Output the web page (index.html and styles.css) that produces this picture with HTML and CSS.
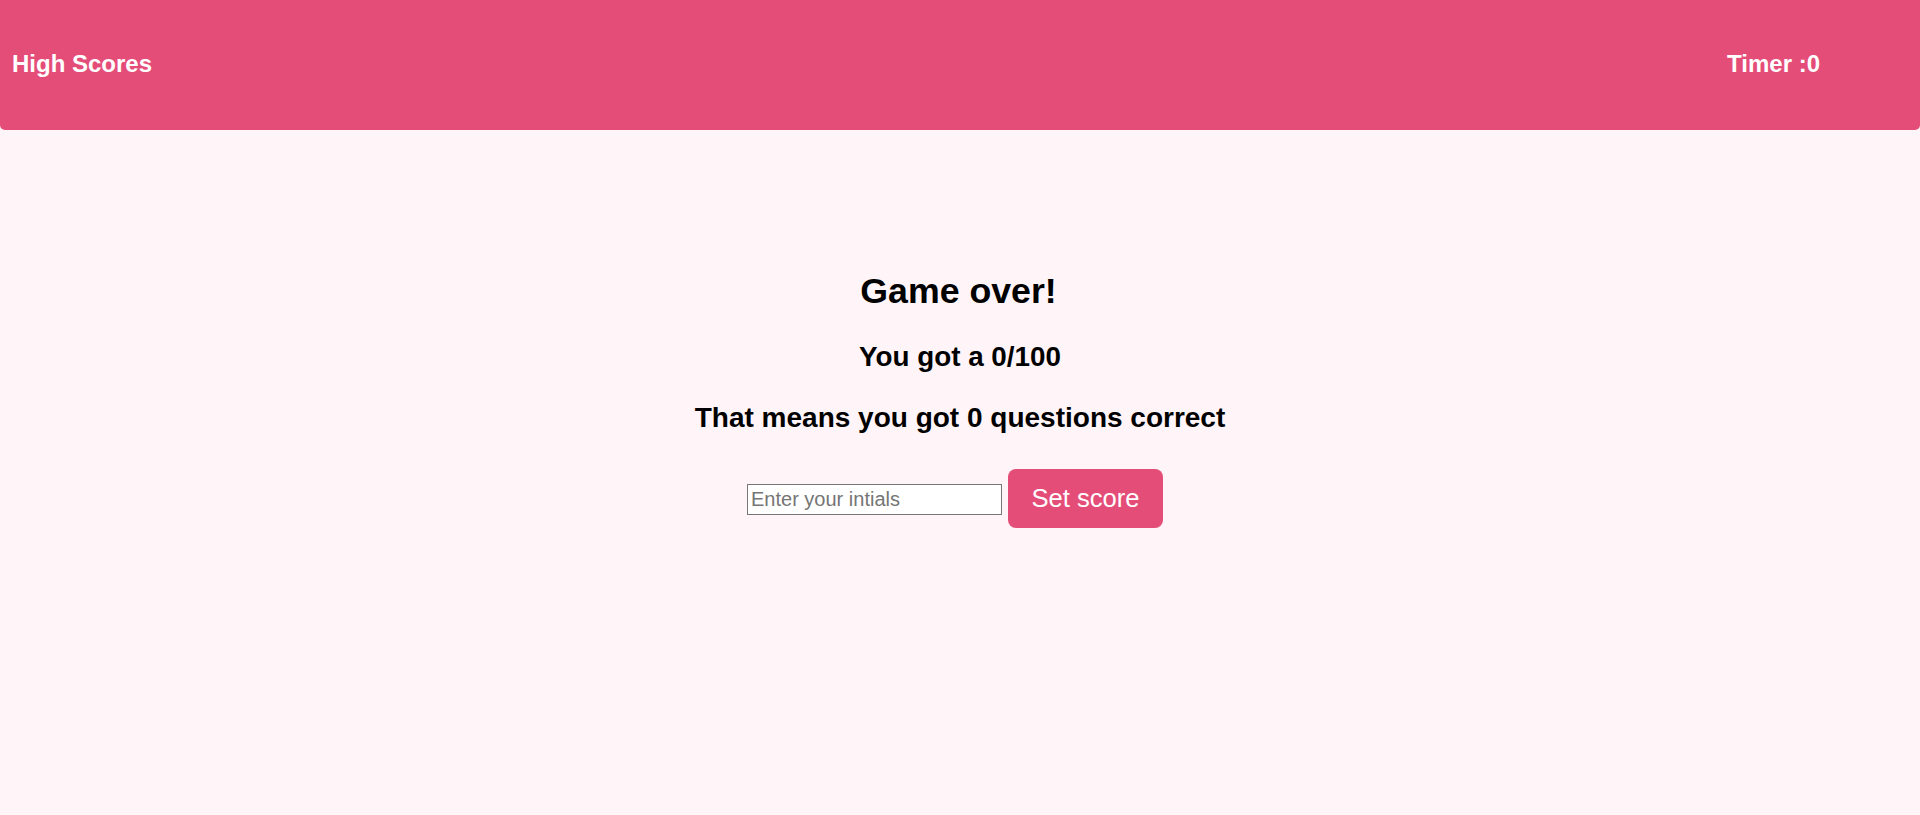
FILE: index.html
```html
<!DOCTYPE html>
<html lang="en">
<head>
<meta charset="utf-8">
<title>Quiz</title>
<link rel="stylesheet" href="styles.css">
</head>
<body>
<header class="topbar">
  <a class="topbar-link" href="#">High Scores</a>
  <span class="timer">Timer :0</span>
</header>
<main class="result">
  <h1 class="result-title">Game over!</h1>
  <h2 class="result-score">You got a 0/100</h2>
  <h2 class="result-detail">That means you got 0 questions correct</h2>
  <form class="score-form">
    <input class="initials" type="text" placeholder="Enter your intials">
    <button class="set-btn" type="button">Set score</button>
  </form>
</main>
</body>
</html>
```

FILE: styles.css
```css
html, body {
  margin: 0;
  padding: 0;
}
body {
  background: #fff4f7;
  font-family: "Liberation Sans", Arial, sans-serif;
  color: #000;
  height: 815px;
  overflow: hidden;
}
.topbar {
  height: 130px;
  background: #e54d79;
  border-radius: 0 0 5px 5px;
  display: flex;
  align-items: center;
  justify-content: space-between;
  padding: 0 100px 0 12px;
  box-sizing: border-box;
}
.topbar-link,
.timer {
  color: #fff;
  font-size: 24px;
  font-weight: bold;
  text-decoration: none;
  line-height: 1;
  margin-top: -3px;
}
.result {
  display: flex;
  flex-direction: column;
  align-items: center;
  padding: 144px 0 0 0;
}
.result-title,
.result-score,
.result-detail {
  margin: 0;
  font-weight: bold;
  line-height: 1;
}
.result-title {
  font-size: 35.7px;
  margin-left: -3px;
}
.result-score {
  font-size: 27.8px;
  margin-top: 33px;
}
.result-detail {
  font-size: 28px;
  margin-top: 33px;
}
.score-form {
  display: flex;
  align-items: center;
  gap: 6px;
  margin: 37px 10px 0 0;
}
.initials {
  width: 255px;
  height: 31px;
  box-sizing: border-box;
  border: 1px solid #767676;
  border-radius: 0;
  padding: 0 3px;
  font-family: "Liberation Sans", Arial, sans-serif;
  font-size: 20px;
  background: #fff;
  margin-top: 3px;
}
.initials::placeholder {
  color: #757575;
}
.set-btn {
  width: 155px;
  height: 59px;
  border: none;
  border-radius: 8px;
  background: #e54d79;
  color: #fff;
  font-family: "Liberation Sans", Arial, sans-serif;
  font-size: 25.6px;
  padding: 0;
}
```
